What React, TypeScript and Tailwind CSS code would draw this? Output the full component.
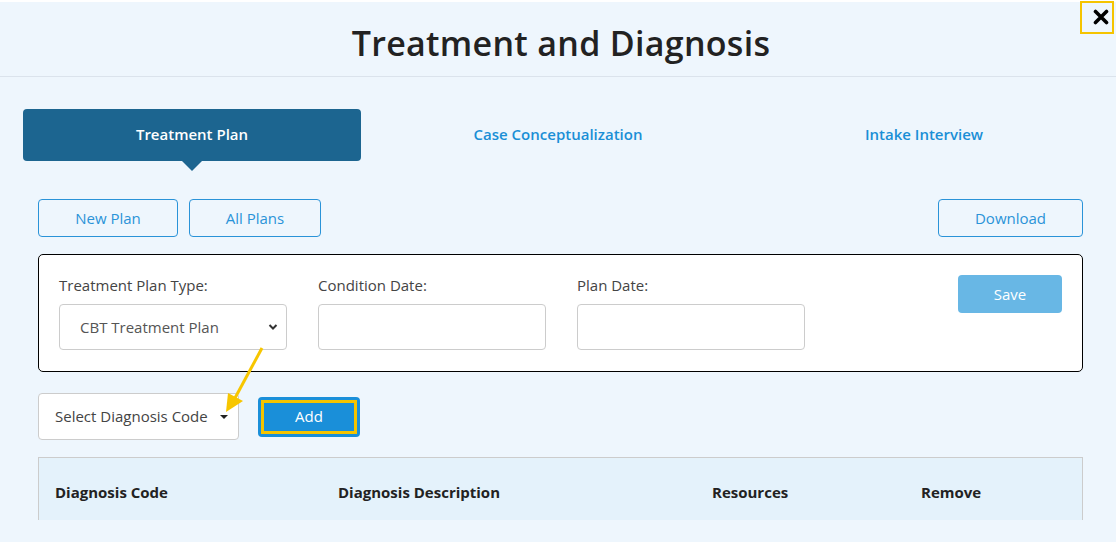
import React from "react";

export default function App() {
  return (
    <div className="relative min-h-[542px] bg-[#eef6fd] font-['Open_Sans',sans-serif] text-[#444]">
      <div className="h-[2px] bg-white"></div>

      {/* header */}
      <div className="h-[75px] border-b border-[#dbe3ec] flex items-center justify-center">
        <h1 className="text-[34px] font-semibold text-[#222] tracking-[0.3px] mt-[8px] ml-[6px]">Treatment and Diagnosis</h1>
      </div>

      {/* close */}
      <button className="absolute top-[1px] left-[1080px] w-[34px] h-[33px] border-2 border-[#f5c400] flex items-start justify-end pr-[2px] pt-[6px]">
        <svg width="18" height="16" viewBox="0 0 18 16">
          <path d="M3.5 2.5 L14.5 13.5 M14.5 2.5 L3.5 13.5" stroke="#000" strokeWidth="3.6" strokeLinecap="round" />
        </svg>
      </button>

      <div className="px-[23px] pt-[32px]">
        {/* tabs */}
        <div className="grid grid-cols-3 gap-[28px] w-[1070px] h-[52px]">
          <div className="relative bg-[#1c6590] rounded-[4px] flex items-center justify-center pb-[1px]">
            <span className="text-white text-[15px] font-semibold">Treatment Plan</span>
            <span className="absolute left-1/2 -translate-x-1/2 top-full border-l-[10px] border-r-[10px] border-t-[10px] border-l-transparent border-r-transparent border-t-[#1c6590]"></span>
          </div>
          <div className="flex items-center justify-center pb-[1px]">
            <span className="text-[#1a8fd6] text-[15px] font-semibold">Case Conceptualization</span>
          </div>
          <div className="flex items-center justify-center pb-[1px]">
            <span className="text-[#1a8fd6] text-[15px] font-semibold">Intake Interview</span>
          </div>
        </div>
      </div>

      <div className="ml-[38px] w-[1045px]">
        {/* action buttons */}
        <div className="mt-[38px] flex items-center">
          <button className="w-[140px] h-[38px] border border-[#2a93d8] rounded-[4px] text-[#2a93d8] text-[15px]">New Plan</button>
          <button className="ml-[11px] w-[132px] h-[38px] border border-[#2a93d8] rounded-[4px] text-[#2a93d8] text-[15px]">All Plans</button>
          <button className="ml-auto w-[145px] h-[38px] border border-[#2a93d8] rounded-[4px] text-[#2a93d8] text-[15px]">Download</button>
        </div>

        {/* form */}
        <div className="mt-[17px] h-[118px] bg-white border border-black rounded-[5px] flex px-[20px] pt-[20px]">
          <div className="w-[228px]">
            <label className="block text-[15px] leading-[20px] text-[#444]">Treatment Plan Type:</label>
            <div className="mt-[9px] h-[46px] border border-[#ccc] rounded-[4px] flex items-center pl-[20px] pr-[8px]">
              <span className="text-[15px] text-[#555]">CBT Treatment Plan</span>
              <svg className="ml-auto" width="10" height="8" viewBox="0 0 10 8">
                <path d="M1.5 2 L5 5.5 L8.5 2" stroke="#333" strokeWidth="2" fill="none" />
              </svg>
            </div>
          </div>
          <div className="w-[228px] ml-[31px]">
            <label className="block text-[15px] leading-[20px] text-[#444]">Condition Date:</label>
            <div className="mt-[9px] h-[46px] border border-[#ccc] rounded-[4px]"></div>
          </div>
          <div className="w-[228px] ml-[31px]">
            <label className="block text-[15px] leading-[20px] text-[#444]">Plan Date:</label>
            <div className="mt-[9px] h-[46px] border border-[#ccc] rounded-[4px]"></div>
          </div>
          <button className="ml-auto w-[104px] h-[38px] bg-[#68b7e5] rounded-[4px] text-white text-[15px]">Save</button>
        </div>

        {/* diagnosis select */}
        <div className="mt-[21px] flex items-center">
          <div className="w-[201px] h-[47px] bg-white border border-[#ccc] rounded-[4px] flex items-center pl-[16px] pr-[10px]">
            <span className="text-[15px] text-[#444]">Select Diagnosis Code</span>
            <span className="ml-auto border-l-[4px] border-r-[4px] border-t-[4px] border-l-transparent border-r-transparent border-t-[#222]"></span>
          </div>
          <button className="ml-[19px] w-[102px] h-[40px] bg-[#1a8fd9] rounded-[4px] p-[3px]">
            <span className="flex h-full items-center justify-center border-[3px] border-[#f5c400] text-white text-[15px]">Add</span>
          </button>
        </div>

        {/* table */}
        <div className="mt-[17px] h-[63px] bg-[#e4f2fb] border-t border-l border-r border-[#ccc] grid grid-cols-[283px_374px_209px_1fr] text-[15px] font-bold text-[#222]">
          <div className="flex items-center pl-[16px] pt-[6px]">Diagnosis Code</div>
          <div className="flex items-center pl-[16px] pt-[6px]">Diagnosis Description</div>
          <div className="flex items-center pl-[16px] pt-[6px]">Resources</div>
          <div className="flex items-center pl-[16px] pt-[6px]">Remove</div>
        </div>
      </div>

      {/* annotation arrow */}
      <svg className="absolute left-0 top-0 pointer-events-none" width="1116" height="542">
        <line x1="262" y1="348" x2="235" y2="398" stroke="#f7c600" strokeWidth="3" />
        <polygon points="226,412 228,393 243,401" fill="#f7c600" />
      </svg>
    </div>
  );
}
